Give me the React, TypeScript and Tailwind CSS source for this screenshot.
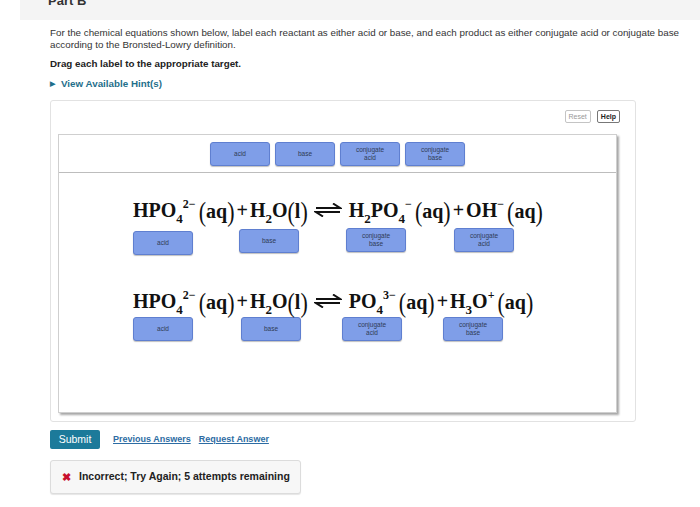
import React from "react";

const Chip = ({ lines }: { lines: string[] }) => (
  <div className="w-[60px] h-[24px] shrink-0 rounded-[3px] border border-[#5f7fd0] bg-[#7f9ee8] flex flex-col items-center justify-center text-[6.5px] leading-[8px] text-[#2f3b55] shadow-[0_1px_1px_rgba(0,0,0,0.25)]">
    {lines.map((l) => (
      <span key={l}>{l}</span>
    ))}
  </div>
);

const Arrow = () => (
  <svg width="28" height="14" viewBox="0 0 28 14" className="ml-[6px] mr-[7px] shrink-0">
    <path d="M2 5 H26 L19 0.5" fill="none" stroke="#111" strokeWidth="2" />
    <path d="M26 9 H2 L9 13.5" fill="none" stroke="#111" strokeWidth="2" />
  </svg>
);

const Sub = ({ children }: { children: React.ReactNode }) => (
  <span className="text-[13px] relative top-[6px]">{children}</span>
);
const Sup = ({ children }: { children: React.ReactNode }) => (
  <span className="text-[12px] relative -top-[9px]">{children}</span>
);
const Paren = ({ children }: { children: React.ReactNode }) => (
  <span>
    <span className="inline-block font-normal text-[22px] scale-y-125 relative top-[1px]">(</span>
    {children}
    <span className="inline-block font-normal text-[22px] scale-y-125 relative top-[1px]">)</span>
  </span>
);

const eqCls =
  "flex items-center h-[30px] font-['Liberation_Serif',serif] font-bold text-[20px] text-[#111] whitespace-nowrap";

export default function App() {
  return (
    <div className="w-[700px] h-[507px] bg-white overflow-hidden font-['Liberation_Sans',Arial,sans-serif] text-[#222]">
      {/* part header */}
      <div className="ml-[20px] h-[20px] bg-[#f4f4f4] overflow-hidden">
        <div className="pl-[28px] -mt-[9px] text-[13px] font-bold text-[#333]">Part B</div>
      </div>

      <div className="pl-[50px] pt-[7px]">
        <p className="text-[9.8px] leading-[12px] text-[#333] w-[640px]">
          For the chemical equations shown below, label each reactant as either acid or base, and each product as
          either conjugate acid or conjugate base according to the Bronsted-Lowry definition.
        </p>
        <p className="mt-[7px] text-[9.8px] leading-[12px] font-bold text-[#222]">Drag each label to the appropriate target.</p>
        <div className="mt-[8px] flex items-center gap-[6px] text-[9.8px] leading-[12px] font-bold text-[#1f6f8b]">
          <span className="text-[7px]">▶</span>
          <span>View Available Hint(s)</span>
        </div>

        {/* outer panel */}
        <div className="mt-[10px] w-[586px] h-[322px] rounded-[3px] border border-[#e2e2e2] flex flex-col">
          <div className="flex justify-end gap-[6px] pr-[15px] pt-[9px]">
            <button className="h-[13px] px-[3px] rounded-[2px] border border-[#c4c4c4] bg-white text-[7px] leading-[11px] text-[#999]">
              Reset
            </button>
            <button className="h-[13px] px-[3px] rounded-[2px] border border-[#777] bg-white text-[7px] leading-[11px] font-bold text-[#222]">
              Help
            </button>
          </div>

          <div className="ml-[7px] mr-[18px] mt-[11px] h-[279px] border border-[#cfcfcf] shadow-[2px_2px_2px_rgba(0,0,0,0.35)] flex flex-col">
            <div className="h-[38px] border-b border-[#bdbdbd] flex items-center justify-center gap-[5px]">
              <Chip lines={["acid"]} />
              <Chip lines={["base"]} />
              <Chip lines={["conjugate", "acid"]} />
              <Chip lines={["conjugate", "base"]} />
            </div>

            <div className="pl-[74px] pt-[22px]">
              {/* equation 1 */}
              <div className={eqCls}>
                <span>HPO<Sub>4</Sub><Sup>2−</Sup></span>
                <span className="ml-[3px]"><Paren>aq</Paren></span>
                <span className="mx-[2px]">+</span>
                <span>H<Sub>2</Sub>O</span>
                <Paren>l</Paren>
                <Arrow />
                <span>H<Sub>2</Sub>PO<Sub>4</Sub><Sup>−</Sup></span>
                <span className="ml-[3px]"><Paren>aq</Paren></span>
                <span className="mx-[2px]">+</span>
                <span>OH<Sup>−</Sup></span>
                <span className="ml-[3px]"><Paren>aq</Paren></span>
              </div>
              <div className="flex items-start mt-[3px] h-[26px]">
                <div className="mt-[3px]"><Chip lines={["acid"]} /></div>
                <div className="ml-[46px] mt-[1px]"><Chip lines={["base"]} /></div>
                <div className="ml-[47px]"><Chip lines={["conjugate", "base"]} /></div>
                <div className="ml-[48px]"><Chip lines={["conjugate", "acid"]} /></div>
              </div>

              {/* equation 2 */}
              <div className={`${eqCls} mt-[32px]`}>
                <span>HPO<Sub>4</Sub><Sup>2−</Sup></span>
                <span className="ml-[3px]"><Paren>aq</Paren></span>
                <span className="mx-[2px]">+</span>
                <span>H<Sub>2</Sub>O</span>
                <Paren>l</Paren>
                <Arrow />
                <span>PO<Sub>4</Sub><Sup>3−</Sup></span>
                <span className="ml-[3px]"><Paren>aq</Paren></span>
                <span className="mx-[2px]">+</span>
                <span>H<Sub>3</Sub>O<Sup>+</Sup></span>
                <span className="ml-[3px]"><Paren>aq</Paren></span>
              </div>
              <div className="flex items-start mt-[1px]">
                <Chip lines={["acid"]} />
                <div className="ml-[48px]"><Chip lines={["base"]} /></div>
                <div className="ml-[41px]"><Chip lines={["conjugate", "acid"]} /></div>
                <div className="ml-[41px]"><Chip lines={["conjugate", "base"]} /></div>
              </div>
            </div>
          </div>
        </div>

        {/* actions */}
        <div className="mt-[8px] flex items-center">
          <button className="h-[19px] w-[50px] rounded-[2px] bg-[#1c7a9a] text-white text-[10.5px]">Submit</button>
          <a className="ml-[13px] text-[9px] font-bold text-[#2d6ca3] underline">Previous Answers</a>
          <a className="ml-[8px] text-[9px] font-bold text-[#2d6ca3] underline">Request Answer</a>
        </div>

        <div className="mt-[11px] w-[251px] h-[34px] rounded-[3px] border border-[#dcdcdc] bg-[#f7f7f7] shadow-[0_1px_1px_rgba(0,0,0,0.1)] flex items-center pl-[11px]">
          <span className="text-[#c8102e] text-[11px] font-bold">✖</span>
          <span className="ml-[8px] text-[10.5px] font-bold text-[#222]">Incorrect; Try Again; 5 attempts remaining</span>
        </div>
      </div>
    </div>
  );
}
